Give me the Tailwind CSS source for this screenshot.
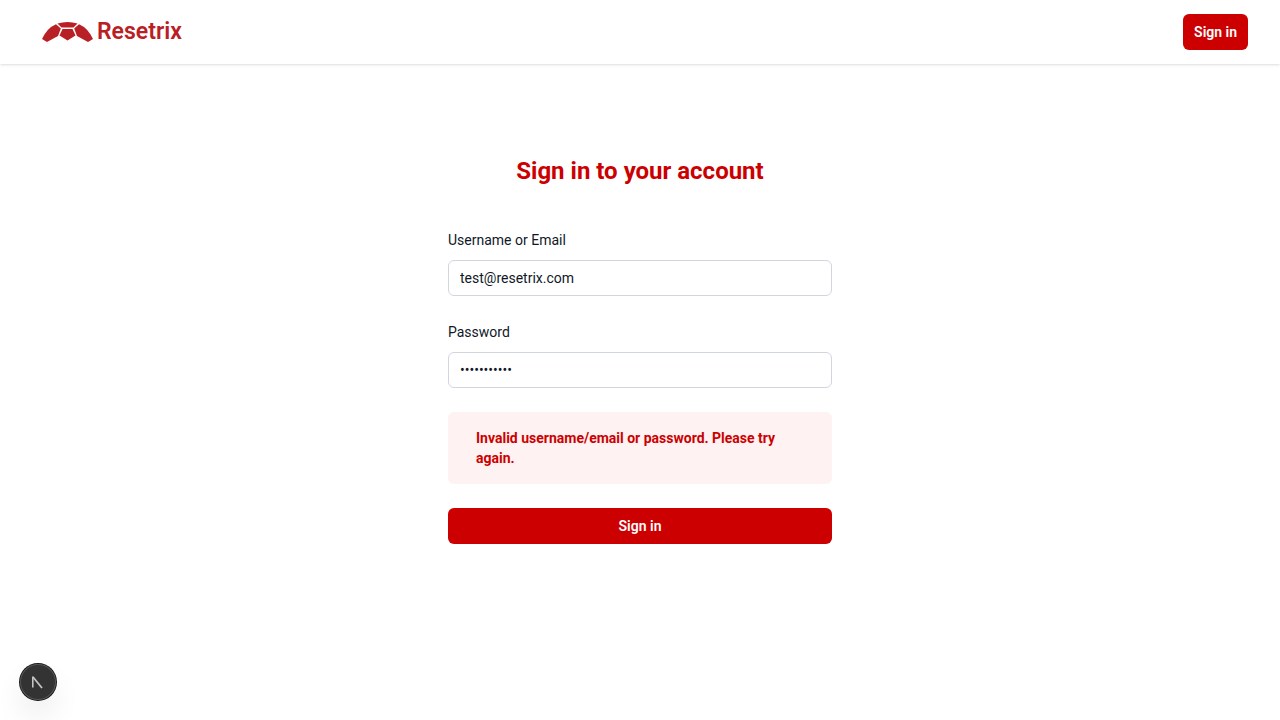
<!DOCTYPE html>
<html lang="en">
<head>
<meta charset="utf-8">
<meta name="viewport" content="width=device-width, initial-scale=1">
<title>Resetrix - Sign in</title>
<script src="https://cdn.jsdelivr.net/npm/@tailwindcss/browser@4"></script>
</head>
<body class="flex min-h-screen flex-col bg-white font-['Roboto','Inter',sans-serif] text-sm text-gray-900">
<header class="flex h-16 items-center justify-between bg-white pr-8 pl-[42px] shadow-sm">
  <a href="#" aria-label="Resetrix home" class="flex items-end gap-1 text-[#b92025]">
    <svg class="h-5 w-[51px]" viewBox="0 0 51 20" fill="currentColor" aria-hidden="true">
      <path d="M15.500 1.500Q25.500-1.500 35.500 1.500L31.500 5.500H19.500Z"/>
      <path d="M14 2.200L18.800 6.500L16 14L5 20L0 17Q5 6 14 2.200Z"/>
      <path d="M37 2.200L32.200 6.500L35 14L46 20L51 17Q46 6 37 2.200Z"/>
      <path d="M20.500 7H30.500L33.500 13.500L25.500 18.500L17.500 13.500Z"/>
    </svg>
    <span class="text-[23px] leading-5 font-semibold">Resetrix</span>
  </a>
  <button type="button" class="h-9 rounded-md bg-[#cc0000] px-[11px] font-semibold text-white">Sign in</button>
</header>
<main class="mx-auto w-full max-w-96 flex-1 pt-[90px]">
  <h1 class="text-center text-2xl leading-[34px] font-bold text-[#cc0000]">Sign in to your account</h1>
  <form class="mt-10 space-y-6">
    <div>
      <label for="username" class="block leading-6">Username or Email</label>
      <input id="username" type="text" value="test@resetrix.com" class="mt-2 block h-9 w-full rounded-md border border-gray-300 px-[11px]">
    </div>
    <div>
      <label for="password" class="block leading-6">Password</label>
      <input id="password" type="password" value="resetrix123" class="mt-2 block h-9 w-full rounded-md border border-gray-300 px-[11px]">
    </div>
    <p role="alert" class="rounded-md bg-red-50 px-7 py-4 leading-5 font-bold text-[#cc0000]">Invalid username/email or password. Please try again.</p>
    <button type="submit" class="block h-9 w-full rounded-md bg-[#cc0000] font-semibold text-white">Sign in</button>
  </form>
</main>
<button type="button" aria-label="Open developer tools" class="fixed bottom-5 left-5 flex size-9 items-center justify-center rounded-full bg-[#333333] shadow-[0_0_0_1px_#171717,inset_0_0_0_1px_#555555,0_16px_32px_-8px_rgba(0,0,0,0.24)]">
  <svg class="size-4" viewBox="0 0 16 16" fill="none" stroke="#c4c4c4" aria-hidden="true">
    <path d="M2.800 13.500V2.500" stroke-width="1.600"/>
    <path d="M3 3L12 14" stroke-width="1.800"/>
  </svg>
</button>
</body>
</html>
